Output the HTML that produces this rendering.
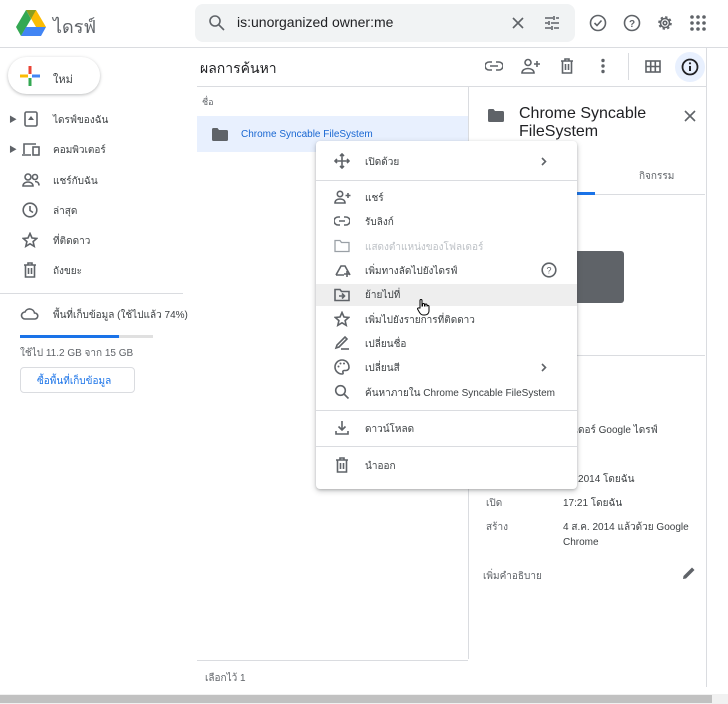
<!DOCTYPE html>
<html><head><meta charset="utf-8"><style>
*{margin:0;padding:0;box-sizing:border-box}
body{width:728px;height:704px;overflow:hidden;background:#fff;font-family:"Liberation Sans","Noto Sans CJK SC",sans-serif;color:#3c4043;position:relative;font-size:11px}
.a{position:absolute}
.t{position:absolute;white-space:nowrap}
svg{position:absolute}
.ic{fill:none;stroke:#5f6368;stroke-width:1.6}
.fi{fill:#5f6368}
</style></head><body>
<!-- header -->
<div class="a" style="left:0;top:47px;width:728px;height:1px;background:#dadce0"></div>
<svg style="left:16px;top:10px" width="30" height="26" viewBox="0 0 30 26"><path d="M10 0h10l10 17h-10z" fill="#fbbc04"/><path d="M10 0L0 17l5 9 10-17z" fill="#34a853"/><path d="M5 26h20l5-9H10z" fill="#4285f4"/><path d="M10 0h10l-5 9z" fill="#188038" opacity=".5"/></svg>
<div class="t" style="left:53px;top:12px;font-size:18px;color:#5f6368">ไดรฟ์</div>
<div class="a" style="left:195px;top:4px;width:380px;height:38px;background:#f1f3f4;border-radius:8px"></div>
<svg style="left:208px;top:14px" width="18" height="18" viewBox="0 0 18 18"><circle cx="7" cy="7" r="5" class="ic" stroke-width="2"/><path d="M11 11l5 5" class="ic" stroke-width="2"/></svg>
<div class="t" style="left:237px;top:14px;font-size:14px;color:#202124">is:unorganized owner:me</div>
<svg style="left:511px;top:16px" width="14" height="14"><path d="M2 2l10 10M12 2L2 12" class="ic" stroke-width="2"/></svg>
<svg style="left:544px;top:15px" width="16" height="16"><path d="M1 3h8M12 3h3M1 8h3M7 8h8M1 13h6M10 13h5M10 1v4M5 6v4M8 11v4" class="ic"/></svg>
<svg style="left:589px;top:14px" width="18" height="18"><circle cx="9" cy="9" r="7.5" class="ic"/><path d="M5.5 9l2.5 2.5 4.5-5" class="ic"/></svg>
<svg style="left:623px;top:14px" width="18" height="18"><circle cx="9" cy="9" r="7.5" class="ic"/><text x="9" y="13" font-size="10" text-anchor="middle" fill="#5f6368" font-family="Liberation Sans" font-weight="bold">?</text></svg>
<svg style="left:656px;top:14px" width="18" height="18"><circle cx="9" cy="9" r="6" class="ic" stroke-width="3" stroke-dasharray="2.4 2.3"/><circle cx="9" cy="9" r="4.5" class="ic" stroke-width="1.8"/><circle cx="9" cy="9" r="1.8" class="ic"/></svg>
<svg style="left:690px;top:15px" width="16" height="16"><g class="fi"><circle cx="2" cy="2" r="1.8"/><circle cx="8" cy="2" r="1.8"/><circle cx="14" cy="2" r="1.8"/><circle cx="2" cy="8" r="1.8"/><circle cx="8" cy="8" r="1.8"/><circle cx="14" cy="8" r="1.8"/><circle cx="2" cy="14" r="1.8"/><circle cx="8" cy="14" r="1.8"/><circle cx="14" cy="14" r="1.8"/></g></svg>
<!-- sidebar -->
<div class="a" style="left:8px;top:57px;width:92px;height:37px;border-radius:19px;background:#fff;box-shadow:0 1px 3px rgba(60,64,67,.35)"></div>
<svg style="left:20px;top:66px" width="20" height="20"><path d="M10 0v8" stroke="#ea4335" stroke-width="3"/><path d="M10 12v8" stroke="#34a853" stroke-width="3"/><path d="M0 10h8" stroke="#fbbc04" stroke-width="3"/><path d="M12 10h8" stroke="#4285f4" stroke-width="3"/></svg>
<div class="t" style="left:53px;top:70px;font-size:11px;color:#3c4043">ใหม่</div>
<div class="t" style="left:9px;top:114px;font-size:8px;color:#5f6368">▶</div>
<div class="t" style="left:9px;top:144px;font-size:8px;color:#5f6368">▶</div>
<svg style="left:23px;top:111px" width="16" height="16"><rect x="2" y="1" width="12" height="14" rx="1.5" class="ic"/><path d="M5 9l3-4 3 4z" class="fi"/></svg>
<svg style="left:21px;top:142px" width="20" height="16"><path d="M3 12V2h12M1 13h9" class="ic"/><rect x="12" y="5" width="6" height="8" class="ic"/></svg>
<svg style="left:22px;top:172px" width="18" height="16"><circle cx="6" cy="5" r="3" class="ic"/><path d="M1 14c0-3 3-4 5-4s5 1 5 4z" class="ic"/><circle cx="13" cy="5" r="2.5" class="ic"/><path d="M13 9.5c2 0 4 1 4 4" class="ic"/></svg>
<svg style="left:22px;top:202px" width="16" height="16"><circle cx="8" cy="8" r="6.8" class="ic"/><path d="M8 4v4.5l3 2" class="ic"/></svg>
<svg style="left:22px;top:232px" width="16" height="16"><path d="M8 1.5l2 4.5 4.8.4-3.7 3.2 1.1 4.7L8 11.8l-4.2 2.5 1.1-4.7L1.2 6.4 6 6z" class="ic" stroke-width="1.3"/></svg>
<svg style="left:23px;top:262px" width="14" height="16"><path d="M1 3h12M5 3V1h4v2M2.5 3v12h9V3M5.5 6v6M8.5 6v6" class="ic"/></svg>
<div class="t" style="left:53px;top:113px;font-size:10px">ไดรฟ์ของฉัน</div>
<div class="t" style="left:53px;top:143px;font-size:10px">คอมพิวเตอร์</div>
<div class="t" style="left:53px;top:174px;font-size:10px">แชร์กับฉัน</div>
<div class="t" style="left:53px;top:204px;font-size:10px">ล่าสุด</div>
<div class="t" style="left:53px;top:234px;font-size:10px">ที่ติดดาว</div>
<div class="t" style="left:53px;top:264px;font-size:10px">ถังขยะ</div>
<div class="a" style="left:0;top:293px;width:183px;height:1px;background:#dadce0"></div>
<svg style="left:20px;top:306px" width="20" height="16"><path d="M5 13a3.5 3.5 0 010-7 5 5 0 019.5 1A3 3 0 0115 13z" class="ic"/></svg>
<div class="t" style="left:53px;top:308px;font-size:10px">พื้นที่เก็บข้อมูล (ใช้ไปแล้ว 74%)</div>
<div class="a" style="left:20px;top:335px;width:133px;height:3px;background:#e0e0e0"></div>
<div class="a" style="left:20px;top:335px;width:99px;height:3px;background:#1a73e8"></div>
<div class="t" style="left:20px;top:346px;font-size:10px;color:#5f6368">ใช้ไป 11.2 GB จาก 15 GB</div>
<div class="a" style="left:20px;top:367px;width:115px;height:26px;border:1px solid #dadce0;border-radius:4px"></div>
<div class="t" style="left:37px;top:374px;font-size:10px;color:#1a73e8">ซื้อพื้นที่เก็บข้อมูล</div>
<!-- main -->
<div class="t" style="left:200px;top:58px;font-size:14px;color:#202124">ผลการค้นหา</div>
<div class="a" style="left:197px;top:86px;width:510px;height:1px;background:#dadce0"></div>
<div class="a" style="left:468px;top:87px;width:1px;height:572px;background:#dadce0"></div>
<div class="a" style="left:706px;top:47px;width:1px;height:640px;background:#dadce0"></div>
<svg style="left:485px;top:60px" width="18" height="12"><path d="M7 2H4a4 4 0 000 8h3M11 2h3a4 4 0 010 8h-3M5 6h8" class="ic" stroke-width="1.8"/></svg>
<svg style="left:521px;top:58px" width="20" height="16"><circle cx="7" cy="4.5" r="3" class="ic"/><path d="M1 15c0-3 3-4.5 6-4.5s6 1.5 6 4.5z" class="ic"/><path d="M16 3v6M13 6h6" class="ic"/></svg>
<svg style="left:560px;top:58px" width="14" height="16"><path d="M1 3h12M5 3V1h4v2M2.5 3v12h9V3M5.5 6v6M8.5 6v6" class="ic"/></svg>
<svg style="left:600px;top:58px" width="6" height="16"><circle cx="3" cy="2.5" r="1.7" class="fi"/><circle cx="3" cy="8" r="1.7" class="fi"/><circle cx="3" cy="13.5" r="1.7" class="fi"/></svg>
<div class="a" style="left:628px;top:53px;width:1px;height:27px;background:#dadce0"></div>
<svg style="left:645px;top:60px" width="16" height="13"><rect x="1" y="1" width="14" height="11" class="ic" stroke-width="1.5"/><path d="M1 6.5h14M5.7 1v11M10.3 1v11" class="ic" stroke-width="1.5"/></svg>
<div class="a" style="left:675px;top:52px;width:30px;height:30px;border-radius:50%;background:#e8f0fe"></div>
<svg style="left:681px;top:58px" width="18" height="18"><circle cx="9" cy="9" r="7.5" fill="none" stroke="#202124" stroke-width="1.8"/><path d="M9 8v5" stroke="#202124" stroke-width="2"/><circle cx="9" cy="5.3" r="1.1" fill="#202124"/></svg>
<div class="t" style="left:202px;top:95px;font-size:9px;color:#5f6368">ชื่อ</div>
<div class="a" style="left:197px;top:116px;width:271px;height:36px;background:#e8f0fe"></div>
<svg style="left:212px;top:128px" width="16" height="13"><path d="M0 1.5A1.5 1.5 0 011.5 0h4l1.5 2h7.5A1.5 1.5 0 0116 3.5v8a1.5 1.5 0 01-1.5 1.5h-13A1.5 1.5 0 010 11.5z" class="fi"/></svg>
<div class="t" style="left:241px;top:129px;font-size:10px;color:#1967d2">Chrome Syncable FileSystem</div>
<div class="a" style="left:197px;top:660px;width:271px;height:1px;background:#dadce0"></div>
<div class="t" style="left:205px;top:671px;font-size:10px;color:#5f6368">เลือกไว้ 1</div>
<!-- details -->
<svg style="left:488px;top:109px" width="16" height="13"><path d="M0 1.5A1.5 1.5 0 011.5 0h4l1.5 2h7.5A1.5 1.5 0 0116 3.5v8a1.5 1.5 0 01-1.5 1.5h-13A1.5 1.5 0 010 11.5z" class="fi"/></svg>
<div class="a" style="left:519px;top:105px;font-size:16px;line-height:18px;color:#202124">Chrome Syncable<br>FileSystem</div>
<svg style="left:684px;top:110px" width="12" height="12"><path d="M1 1l10 10M11 1L1 11" class="ic" stroke-width="1.6"/></svg>
<div class="t" style="left:639px;top:169px;font-size:10px;color:#5f6368">กิจกรรม</div>
<div class="a" style="left:469px;top:194px;width:236px;height:1px;background:#dadce0"></div>
<div class="a" style="left:540px;top:192px;width:55px;height:3px;background:#1a73e8"></div>
<div class="a" style="left:520px;top:251px;width:104px;height:52px;background:#5f6368;border-radius:3px"></div>
<div class="a" style="left:484px;top:355px;width:221px;height:1px;background:#dadce0"></div>
<div class="t" style="left:556px;top:423px;font-size:10px">โฟลเดอร์ Google ไดรฟ์</div>
<div class="t" style="left:563px;top:472px;font-size:10px">.ค. 2014 โดยฉัน</div>
<div class="t" style="left:486px;top:496px;font-size:10px;color:#5f6368">เปิด</div>
<div class="t" style="left:563px;top:496px;font-size:10px">17:21 โดยฉัน</div>
<div class="t" style="left:486px;top:520px;font-size:10px;color:#5f6368">สร้าง</div>
<div class="a" style="left:563px;top:520px;font-size:10px;line-height:15px">4 ส.ค. 2014 แล้วด้วย Google<br>Chrome</div>
<div class="t" style="left:483px;top:569px;font-size:10px;color:#5f6368">เพิ่มคำอธิบาย</div>
<svg style="left:682px;top:566px" width="14" height="14"><path d="M1 13l.5-3L10 1.5l2.5 2.5L4 12.5z" class="fi"/></svg>
<!-- scrollbar -->
<div class="a" style="left:0;top:694px;width:728px;height:10px;background:#f1f1f1"></div>
<div class="a" style="left:0;top:695px;width:712px;height:8px;background:#c1c1c1"></div>
<!-- menu -->
<div class="a" style="left:316px;top:141px;width:261px;height:348px;background:#fff;border-radius:4px;box-shadow:0 2px 6px rgba(60,64,67,.3),0 1px 2px rgba(60,64,67,.2)"></div>
<div class="a" style="left:316px;top:180px;width:261px;height:1px;background:#dadce0"></div>
<div class="a" style="left:316px;top:284px;width:261px;height:22px;background:#eeeeee"></div>
<div class="a" style="left:316px;top:410px;width:261px;height:1px;background:#dadce0"></div>
<div class="a" style="left:316px;top:446px;width:261px;height:1px;background:#dadce0"></div>
<svg style="left:334px;top:153px" width="16" height="16"><path d="M8 1v14M1 8h14M6 3l2-2 2 2M6 13l2 2 2-2M3 6L1 8l2 2M13 6l2 2-2 2" class="ic" stroke-width="1.4"/></svg>
<svg style="left:334px;top:190px" width="18" height="14"><circle cx="6" cy="4" r="2.7" class="ic" stroke-width="1.4"/><path d="M1 13c0-3 2.5-4 5-4s5 1 5 4z" class="ic" stroke-width="1.4"/><path d="M14 3v5M11.5 5.5h5" class="ic" stroke-width="1.4"/></svg>
<svg style="left:334px;top:216px" width="16" height="10"><path d="M6 1H4a4 4 0 000 8h2M10 1h2a4 4 0 010 8h-2M5 5h6" class="ic" stroke-width="1.4"/></svg>
<svg style="left:334px;top:239px" width="16" height="14"><path d="M1 1.5h5l1.5 2h7.5v9H1z" fill="none" stroke="#9aa0a6" stroke-width="1.3"/></svg>
<svg style="left:334px;top:262px" width="18" height="16"><path d="M2 13L7 4h4l5 9" class="ic" stroke-width="1.3"/><path d="M2 13h8M13 9v6M10 12h6" class="ic" stroke-width="1.3"/></svg>
<svg style="left:334px;top:288px" width="16" height="14"><path d="M1 1.5h5l1.5 2h7.5v9H1z" class="ic" stroke-width="1.3"/><path d="M5 8h5M8 5.5L10.5 8 8 10.5" class="ic" stroke-width="1.3"/></svg>
<svg style="left:334px;top:311px" width="16" height="16"><path d="M8 1.5l2 4.5 4.8.4-3.7 3.2 1.1 4.7L8 11.8l-4.2 2.5 1.1-4.7L1.2 6.4 6 6z" class="ic" stroke-width="1.2"/></svg>
<svg style="left:334px;top:335px" width="16" height="16"><path d="M2 13l1-3 8-8 2 2-8 8z" class="ic" stroke-width="1.3"/><path d="M7 14h8" class="ic" stroke-width="1.8"/></svg>
<svg style="left:334px;top:359px" width="16" height="16"><path d="M8 1a7 7 0 000 14c1 0 1.5-.7 1-1.5-.5-1 0-2 1.2-2H12a3 3 0 003-3C15 4 12 1 8 1z" class="ic" stroke-width="1.3"/><circle cx="4.5" cy="7.5" r="1" class="fi"/><circle cx="6.5" cy="4.5" r="1" class="fi"/><circle cx="10" cy="4.5" r="1" class="fi"/></svg>
<svg style="left:334px;top:384px" width="16" height="16"><circle cx="6.5" cy="6.5" r="4.8" class="ic" stroke-width="1.5"/><path d="M10 10l4.5 4.5" class="ic" stroke-width="1.6"/></svg>
<svg style="left:334px;top:420px" width="16" height="16"><path d="M8 1v9M4.5 6.5L8 10l3.5-3.5M2 11v3h12v-3" class="ic" stroke-width="1.4"/></svg>
<svg style="left:335px;top:457px" width="14" height="16"><path d="M1 3h12M5 3V1h4v2M2.5 3v12h9V3M5.5 6v6M8.5 6v6" class="ic" stroke-width="1.4"/></svg>
<div class="t" style="left:365px;top:155px;font-size:10px">เปิดด้วย</div>
<svg style="left:541px;top:157px" width="6" height="9"><path d="M1 1l3.5 3.5L1 8" class="ic" stroke-width="1.2"/></svg>
<div class="t" style="left:365px;top:191px;font-size:10px">แชร์</div>
<div class="t" style="left:365px;top:215px;font-size:10px">รับลิงก์</div>
<div class="t" style="left:365px;top:240px;font-size:10px;color:#bdc1c6">แสดงตำแหน่งของโฟลเดอร์</div>
<div class="t" style="left:365px;top:264px;font-size:10px">เพิ่มทางลัดไปยังไดรฟ์</div>
<svg style="left:541px;top:262px" width="16" height="16"><circle cx="8" cy="8" r="6.8" class="ic" stroke-width="1.3"/><text x="8" y="11.5" font-size="9" text-anchor="middle" fill="#5f6368" font-family="Liberation Sans">?</text></svg>
<div class="t" style="left:365px;top:288px;font-size:10px">ย้ายไปที่</div>
<div class="t" style="left:365px;top:313px;font-size:10px">เพิ่มไปยังรายการที่ติดดาว</div>
<div class="t" style="left:365px;top:337px;font-size:10px">เปลี่ยนชื่อ</div>
<div class="t" style="left:365px;top:361px;font-size:10px">เปลี่ยนสี</div>
<svg style="left:541px;top:363px" width="6" height="9"><path d="M1 1l3.5 3.5L1 8" class="ic" stroke-width="1.2"/></svg>
<div class="t" style="left:365px;top:386px;font-size:10px">ค้นหาภายใน Chrome Syncable FileSystem</div>
<div class="t" style="left:365px;top:422px;font-size:10px">ดาวน์โหลด</div>
<div class="t" style="left:365px;top:459px;font-size:10px">นำออก</div>
<svg style="left:416px;top:298px" width="14" height="18"><path d="M4 10V2.5a1 1 0 012 0V8h.5V6.5a1 1 0 012 0V8H9V7a1 1 0 012 0v1.5a1 1 0 012 0V13c0 2-1.5 4-4 4H7c-1.5 0-2.5-1-3.5-2.5L1.5 11a1 1 0 011.5-1z" fill="#fff" stroke="#000" stroke-width="1"/></svg>
</body></html>
